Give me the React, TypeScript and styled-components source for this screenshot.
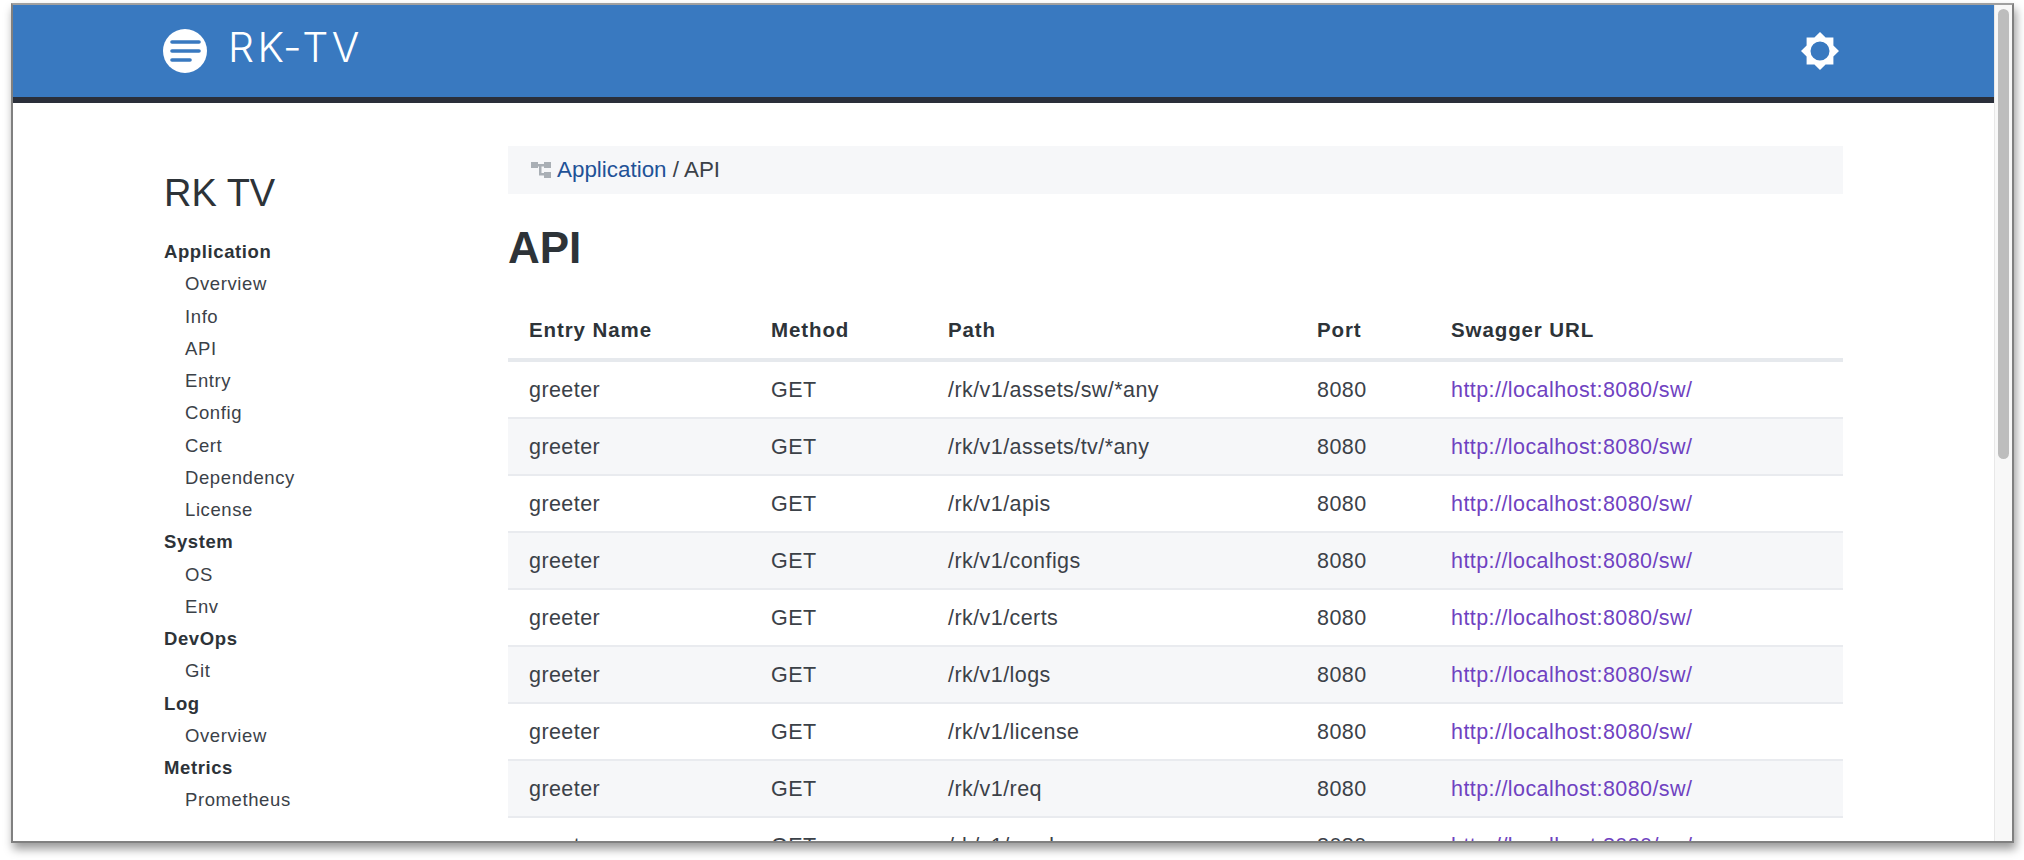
import styled, { createGlobalStyle } from 'styled-components';

const GlobalStyle = createGlobalStyle`
  html, body {
    margin: 0;
    height: 100%;
    background: #fff;
    overflow: hidden;
  }
  body {
    font-family: "Liberation Sans", Arial, sans-serif;
    color: #2d3338;
  }
`;

const NAV = [
  { title: 'Application', items: ['Overview', 'Info', 'API', 'Entry', 'Config', 'Cert', 'Dependency', 'License'] },
  { title: 'System', items: ['OS', 'Env'] },
  { title: 'DevOps', items: ['Git'] },
  { title: 'Log', items: ['Overview'] },
  { title: 'Metrics', items: ['Prometheus'] },
];

const PATHS = [
  '/rk/v1/assets/sw/*any',
  '/rk/v1/assets/tv/*any',
  '/rk/v1/apis',
  '/rk/v1/configs',
  '/rk/v1/certs',
  '/rk/v1/logs',
  '/rk/v1/license',
  '/rk/v1/req',
  '/rk/v1/ready',
];

const App = () => (
  <>
    <GlobalStyle />
    <Screen>
      <Frame>
        <Content>
          <Header>
            <Brand>
              <svg width="44" height="44" viewBox="0 0 44 44">
                <circle cx="22" cy="22" r="22" fill="#fff" />
                <g stroke="#3979c0" strokeWidth="3.6" strokeLinecap="round">
                  <line x1="9" y1="13" x2="36" y2="13" />
                  <line x1="9" y1="22" x2="36" y2="22" />
                  <line x1="9" y1="31" x2="27" y2="31" />
                </g>
              </svg>
              <BrandName>RK-TV</BrandName>
            </Brand>
            <svg width="38" height="38" viewBox="0 0 38 38">
              <path
                fillRule="evenodd"
                fill="#fff"
                d="M19 0l5.6 5.6h7.8v7.8L38 19l-5.6 5.6v7.8h-7.8L19 38l-5.6-5.6H5.600v-7.800L0 19l5.600-5.600V5.600h7.800z M19 9.500a9.500 9.500 0 1 0 0 19a9.500 9.500 0 1 0 0-19z"
              />
            </svg>
          </Header>
          <Body>
            <Sidebar>
              <SiteTitle>RK TV</SiteTitle>
              {NAV.map((group) => (
                <div key={group.title}>
                  <GroupTitle>{group.title}</GroupTitle>
                  {group.items.map((item) => (
                    <NavItem key={item}>{item}</NavItem>
                  ))}
                </div>
              ))}
            </Sidebar>
            <Main>
              <Breadcrumb>
                <svg width="21" height="18" viewBox="0 0 21 18">
                  <g fill="#a9afb5">
                    <rect x="0" y="1" width="7" height="6" />
                    <rect x="13" y="1" width="7" height="6" />
                    <rect x="13" y="11" width="7" height="6" />
                    <rect x="7" y="3" width="6" height="2.500" />
                    <rect x="8" y="3" width="2.500" height="11" />
                    <rect x="8" y="12" width="5" height="2.500" />
                  </g>
                </svg>
                <CrumbLink>Application</CrumbLink>
                <span>&nbsp;/ API</span>
              </Breadcrumb>
              <PageTitle>API</PageTitle>
              <Table>
                <colgroup>
                  <col width="242" />
                  <col width="177" />
                  <col width="369" />
                  <col width="134" />
                  <col />
                </colgroup>
                <thead>
                  <tr>
                    <Th>Entry Name</Th>
                    <Th>Method</Th>
                    <Th>Path</Th>
                    <Th>Port</Th>
                    <Th>Swagger URL</Th>
                  </tr>
                </thead>
                <tbody>
                  {PATHS.map((path, i) => (
                    <Row key={path} $striped={i % 2 === 1}>
                      <Td>greeter</Td>
                      <Td>GET</Td>
                      <Td>{path}</Td>
                      <Td>8080</Td>
                      <Td>
                        <SwaggerLink>http://localhost:8080/sw/</SwaggerLink>
                      </Td>
                    </Row>
                  ))}
                </tbody>
              </Table>
            </Main>
          </Body>
        </Content>
        <ScrollTrack>
          <ScrollThumb />
        </ScrollTrack>
      </Frame>
    </Screen>
  </>
);

export default App;

const Screen = styled.div`
  height: 860px;
  padding: 3px 10px 0 11px;
  box-sizing: border-box;
`;

const Frame = styled.div`
  display: flex;
  height: 840px;
  box-sizing: border-box;
  border: 2px solid #808080;
  border-top-color: #a0a0a0;
  background: #fff;
  overflow: hidden;
  box-shadow: 2px 6px 9px rgba(0, 0, 0, 0.4);
`;

const Content = styled.div`
  flex: 1;
  min-width: 0;
  overflow: hidden;
`;

const Header = styled.header`
  display: flex;
  align-items: center;
  justify-content: space-between;
  height: 92px;
  padding: 0 155px 0 150px;
  background: #3979c0;
  border-bottom: 6px solid #2a2f3a;
`;

const Brand = styled.div`
  display: flex;
  align-items: center;
  gap: 21px;
`;

const BrandName = styled.span`
  margin-bottom: 8px;
  font-family: Inter, sans-serif;
  font-weight: 300;
  font-size: 41px;
  letter-spacing: 3.500px;
  color: #fff;
`;

const Body = styled.div`
  display: flex;
  padding: 43px 0 0 151px;
`;

const Sidebar = styled.nav`
  flex: none;
  width: 344px;
`;

const SiteTitle = styled.h3`
  margin: 25px 0 21px;
  font-size: 38px;
  font-weight: 400;
  line-height: 44px;
`;

const GroupTitle = styled.div`
  font-size: 18.500px;
  font-weight: 700;
  letter-spacing: 0.600px;
  line-height: 32.250px;
`;

const NavItem = styled.div`
  padding-left: 21px;
  font-size: 18.500px;
  letter-spacing: 0.600px;
  line-height: 32.250px;
  color: #3b4148;
`;

const Main = styled.main`
  flex: none;
  width: 1335px;
`;

const Breadcrumb = styled.div`
  display: flex;
  align-items: center;
  height: 48px;
  padding-left: 23px;
  background: #f6f7f9;
  font-size: 22.400px;
  color: #3b4148;
`;

const CrumbLink = styled.span`
  margin-left: 5px;
  color: #1f5297;
`;

const PageTitle = styled.h1`
  margin: 29px 0 34px;
  font-size: 44px;
  font-weight: 700;
  line-height: 50px;
`;

const Table = styled.table`
  width: 100%;
  border-collapse: separate;
  border-spacing: 0;
  table-layout: fixed;
`;

const Th = styled.th`
  height: 55px;
  box-sizing: border-box;
  padding: 0 0 5px 21px;
  text-align: left;
  font-size: 20.500px;
  font-weight: 700;
  letter-spacing: 0.900px;
  border-bottom: 4px solid #e6e9ed;
`;

const Row = styled.tr<{ $striped: boolean }>`
  background: ${(p) => (p.$striped ? '#f6f7f9' : '#fff')};
`;

const Td = styled.td`
  height: 57px;
  box-sizing: border-box;
  padding: 1px 0 0 21px;
  font-size: 21.500px;
  letter-spacing: 0.430px;
  color: #3b4148;
  border-bottom: 2px solid #e9ebef;
`;

const SwaggerLink = styled.span`
  color: #6f42c1;
`;

const ScrollTrack = styled.div`
  flex: none;
  width: 18px;
  padding: 4px 3px 0;
  box-sizing: border-box;
  background: #f8f8f8;
  border-left: 1px solid #e8e8e8;
`;

const ScrollThumb = styled.div`
  height: 450px;
  background: #bdbdbd;
  border-radius: 6px;
`;
